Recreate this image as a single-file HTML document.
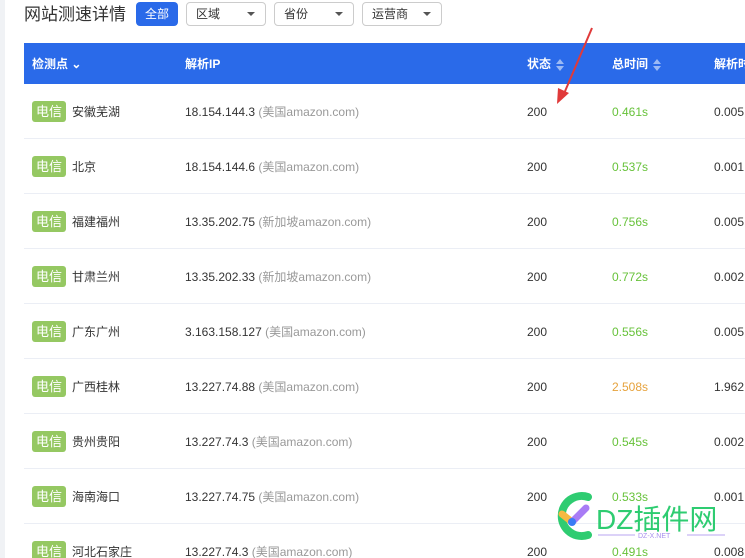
<!DOCTYPE html>
<html><head><meta charset="utf-8"><style>
html,body{margin:0;width:745px;height:558px;overflow:hidden}
body{background:#fff;font-family:"Liberation Sans","Noto Sans CJK SC",sans-serif;position:relative}
.strip{position:absolute;left:0;top:0;width:5px;height:558px;background:#f0f2f5}
.title{position:absolute;left:24px;top:4px;font-size:17px;line-height:22px;color:#333}
.btn{position:absolute;top:2px;height:24px;border-radius:4px;font-size:12px;line-height:22px;box-sizing:border-box}
.all{left:136px;width:42px;background:#2a6ae9;color:#fff;text-align:center;line-height:24px}
.sel{border:1px solid #ccc;color:#333;padding-left:9px;background:#fff}
.sel:after{content:"";position:absolute;right:10px;top:9px;border:4px solid transparent;border-top:4px solid #555}
.hdr{position:absolute;left:24px;top:43px;width:721px;height:41px;background:#2a6ae9;color:#fff;font-weight:bold;font-size:12px;white-space:nowrap;overflow:hidden}
.hdr span{position:absolute;top:13px;line-height:16px}
.sort{display:inline-block;vertical-align:middle;margin-left:5px;width:8px;height:12px;position:relative}
.sort:before{content:"";position:absolute;left:0;top:0;border:4px solid transparent;border-bottom:5px solid #9bbaf5;border-top:0}
.sort:after{content:"";position:absolute;left:0;top:7px;border:4px solid transparent;border-top:5px solid #9bbaf5;border-bottom:0}
.row{position:absolute;left:24px;width:721px;height:54px;border-bottom:1px solid #ebeef5;font-size:12px;color:#333;white-space:nowrap}
.row span{position:absolute;top:20px;line-height:16px;height:16px}
.tag{position:absolute;left:8px;top:17px;background:#95c862;color:#fff;font-size:13px;width:34px;text-align:center;height:21px;line-height:21px;border-radius:3px}
.g{color:#999;font-style:normal}
.gr{color:#67c23a}.y{color:#e6a23c}
</style></head><body>
<div class="strip"></div>
<div class="title">网站测速详情</div>
<div class="btn all">全部</div>
<div class="btn sel" style="left:186px;width:80px">区域</div>
<div class="btn sel" style="left:274px;width:80px">省份</div>
<div class="btn sel" style="left:362px;width:80px">运营商</div>
<div class="hdr"><span style="left:8px">检测点 ⌄</span><span style="left:161px">解析IP</span><span style="left:503px">状态<i class="sort"></i></span><span style="left:588px">总时间<i class="sort"></i></span><span style="left:690px">解析时间</span></div>
<div class="row" style="top:84px"><div class="tag">电信</div><span style="left:48px">安徽芜湖</span><span style="left:161px">18.154.144.3 <i class="g">(美国amazon.com)</i></span><span style="left:503px">200</span><span class="gr" style="left:588px">0.461s</span><span style="left:690px">0.005</span></div>
<div class="row" style="top:139px"><div class="tag">电信</div><span style="left:48px">北京</span><span style="left:161px">18.154.144.6 <i class="g">(美国amazon.com)</i></span><span style="left:503px">200</span><span class="gr" style="left:588px">0.537s</span><span style="left:690px">0.001</span></div>
<div class="row" style="top:194px"><div class="tag">电信</div><span style="left:48px">福建福州</span><span style="left:161px">13.35.202.75 <i class="g">(新加坡amazon.com)</i></span><span style="left:503px">200</span><span class="gr" style="left:588px">0.756s</span><span style="left:690px">0.005</span></div>
<div class="row" style="top:249px"><div class="tag">电信</div><span style="left:48px">甘肃兰州</span><span style="left:161px">13.35.202.33 <i class="g">(新加坡amazon.com)</i></span><span style="left:503px">200</span><span class="gr" style="left:588px">0.772s</span><span style="left:690px">0.002</span></div>
<div class="row" style="top:304px"><div class="tag">电信</div><span style="left:48px">广东广州</span><span style="left:161px">3.163.158.127 <i class="g">(美国amazon.com)</i></span><span style="left:503px">200</span><span class="gr" style="left:588px">0.556s</span><span style="left:690px">0.005</span></div>
<div class="row" style="top:359px"><div class="tag">电信</div><span style="left:48px">广西桂林</span><span style="left:161px">13.227.74.88 <i class="g">(美国amazon.com)</i></span><span style="left:503px">200</span><span class="y" style="left:588px">2.508s</span><span style="left:690px">1.962</span></div>
<div class="row" style="top:414px"><div class="tag">电信</div><span style="left:48px">贵州贵阳</span><span style="left:161px">13.227.74.3 <i class="g">(美国amazon.com)</i></span><span style="left:503px">200</span><span class="gr" style="left:588px">0.545s</span><span style="left:690px">0.002</span></div>
<div class="row" style="top:469px"><div class="tag">电信</div><span style="left:48px">海南海口</span><span style="left:161px">13.227.74.75 <i class="g">(美国amazon.com)</i></span><span style="left:503px">200</span><span class="gr" style="left:588px">0.533s</span><span style="left:690px">0.001</span></div>
<div class="row" style="top:524px"><div class="tag">电信</div><span style="left:48px">河北石家庄</span><span style="left:161px">13.227.74.3 <i class="g">(美国amazon.com)</i></span><span style="left:503px">200</span><span class="gr" style="left:588px">0.491s</span><span style="left:690px">0.008</span></div>
<svg style="position:absolute;left:0;top:0" width="745" height="558">
<line x1="592" y1="28" x2="563" y2="96" stroke="#e03a3a" stroke-width="2"/>
<polygon points="557,104 558,88 569,93" fill="#e03a3a"/>
<path d="M588 497 A20 20 0 1 0 588 535" fill="none" stroke="#2ecc71" stroke-width="8" stroke-linecap="round"/>
<line x1="562" y1="514" x2="572" y2="522" stroke="#f5b942" stroke-width="7" stroke-linecap="round"/>
<line x1="572" y1="522" x2="586" y2="508" stroke="#a87cf5" stroke-width="7" stroke-linecap="round"/>
<circle cx="572" cy="522" r="4" fill="#3a7cf5"/>
<text x="596" y="529" font-size="28" fill="#2ecc71" font-family="Liberation Sans,Noto Sans CJK SC,sans-serif">DZ插件网</text>
<line x1="598" y1="535" x2="635" y2="535" stroke="#b9a6f0"/><line x1="687" y1="535" x2="725" y2="535" stroke="#b9a6f0"/>
<text x="638" y="538" font-size="7" fill="#a890ee" font-family="Liberation Sans,sans-serif">DZ-X.NET</text>
</svg>
</body></html>
